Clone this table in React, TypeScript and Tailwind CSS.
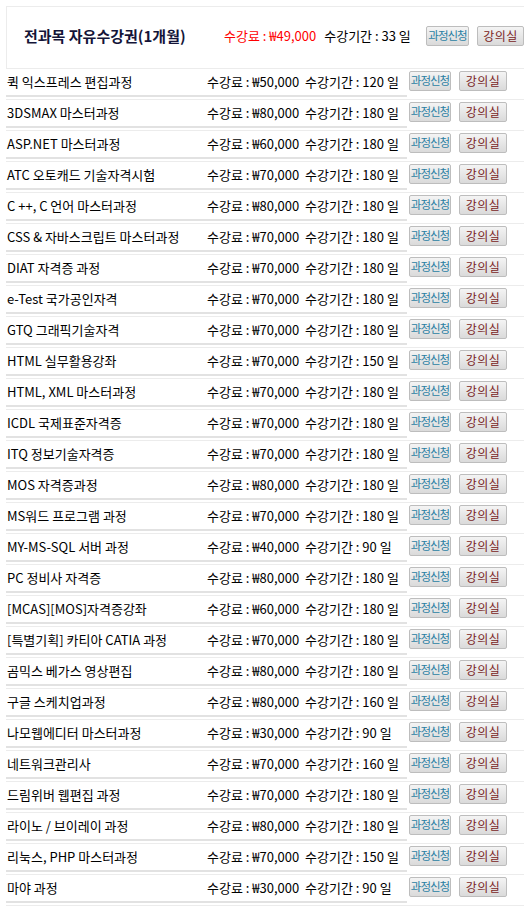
import React from "react";

const rows: [string, string, string][] = [
  ["퀵 익스프레스 편집과정", "₩50,000", "120"],
  ["3DSMAX 마스터과정", "₩80,000", "180"],
  ["ASP.NET 마스터과정", "₩60,000", "180"],
  ["ATC 오토캐드 기술자격시험", "₩70,000", "180"],
  ["C ++, C 언어 마스터과정", "₩80,000", "180"],
  ["CSS & 자바스크립트 마스터과정", "₩70,000", "180"],
  ["DIAT 자격증 과정", "₩70,000", "180"],
  ["e-Test 국가공인자격", "₩70,000", "180"],
  ["GTQ 그래픽기술자격", "₩70,000", "180"],
  ["HTML 실무활용강좌", "₩70,000", "150"],
  ["HTML, XML 마스터과정", "₩70,000", "180"],
  ["ICDL 국제표준자격증", "₩70,000", "180"],
  ["ITQ 정보기술자격증", "₩70,000", "180"],
  ["MOS 자격증과정", "₩80,000", "180"],
  ["MS워드 프로그램 과정", "₩70,000", "180"],
  ["MY-MS-SQL 서버 과정", "₩40,000", "90"],
  ["PC 정비사 자격증", "₩80,000", "180"],
  ["[MCAS][MOS]자격증강좌", "₩60,000", "180"],
  ["[특별기획] 카티아 CATIA 과정", "₩70,000", "180"],
  ["곰믹스 베가스 영상편집", "₩80,000", "180"],
  ["구글 스케치업과정", "₩80,000", "160"],
  ["나모웹에디터 마스터과정", "₩30,000", "90"],
  ["네트워크관리사", "₩70,000", "160"],
  ["드림위버 웹편집 과정", "₩70,000", "180"],
  ["라이노 / 브이레이 과정", "₩80,000", "180"],
  ["리눅스, PHP 마스터과정", "₩70,000", "150"],
  ["마야 과정", "₩30,000", "90"],
];

function Btns({ first = 42, second = 48 }: { first?: number; second?: number }) {
  return (
    <div className="flex items-center">
      <button
        className="h-[20px] border border-[#bdbdbd] rounded-[2px] bg-gradient-to-b from-[#f4f4f4] to-[#dadada] text-[11.5px] leading-none text-[#2a7fa3] tracking-[-1px] whitespace-nowrap flex items-center justify-center p-0"
        style={{ width: first }}
      >
        과정신청
      </button>
      <button
        className="ml-[8px] h-[20px] border border-[#bdbdbd] rounded-[2px] bg-gradient-to-b from-[#f4f4f4] to-[#dadada] text-[12px] leading-none text-[#7a2424] tracking-[0.5px] whitespace-nowrap flex items-center justify-center p-0"
        style={{ width: second }}
      >
        강의실
      </button>
    </div>
  );
}

export default function App() {
  return (
    <div
      className="bg-white w-[524px] h-[906px] overflow-hidden pl-[6px] pt-[6px] text-black text-[13px]"
      style={{ fontFamily: '"Noto Sans CJK KR", "Noto Sans", sans-serif' }}
    >
      <div className="h-[63px] border-t border-l border-b border-[#ececec] flex items-center pb-[3px]">
        <div className="w-[217px] pl-[17px] font-bold text-[15px] text-[#141438] whitespace-nowrap">
          전과목 자유수강권(1개월)
        </div>
        <div className="w-[202px] whitespace-nowrap">
          <span className="text-[#ff0000]">수강료 : ₩49,000</span>
          <span className="ml-[8px]">수강기간 : 33 일</span>
        </div>
        <Btns first={43} second={47} />
      </div>
      {rows.map(([name, price, days], i) => (
        <div key={i} className="border-b border-[#ececec]">
          <div className="flex h-[28px] mb-[2px]">
            <div className="w-[200px] border-b-2 border-[#e2e2e2] pl-px flex items-center whitespace-nowrap">
              {name}
            </div>
            <div className="w-[201px] border-b-2 border-[#e2e2e2] pl-px flex items-center whitespace-nowrap">
              수강료 : {price}&nbsp; 수강기간 : {days} 일
            </div>
            <div className="pl-[2px] pt-[2px]">
              <Btns />
            </div>
          </div>
        </div>
      ))}
    </div>
  );
}
